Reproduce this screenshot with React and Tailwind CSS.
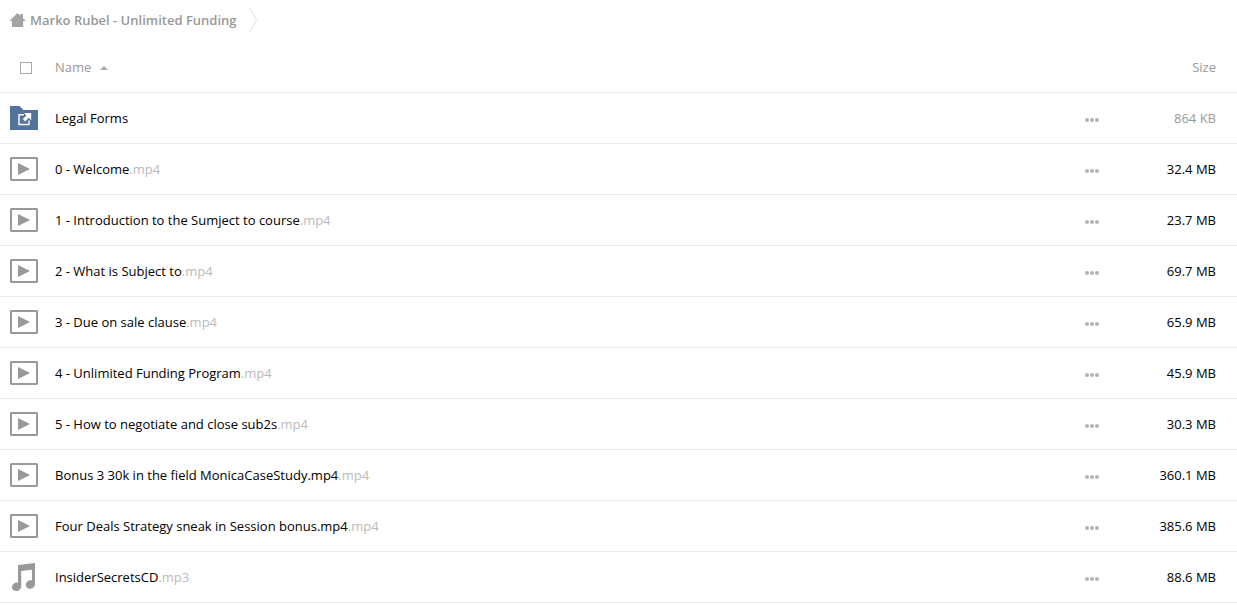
const files = [
  { name: "Legal Forms", ext: "", size: "864 KB", kind: "folder" },
  { name: "0 - Welcome", ext: ".mp4", size: "32.4 MB", kind: "video" },
  { name: "1 - Introduction to the Sumject to course", ext: ".mp4", size: "23.7 MB", kind: "video" },
  { name: "2 - What is Subject to", ext: ".mp4", size: "69.7 MB", kind: "video" },
  { name: "3 - Due on sale clause", ext: ".mp4", size: "65.9 MB", kind: "video" },
  { name: "4 - Unlimited Funding Program", ext: ".mp4", size: "45.9 MB", kind: "video" },
  { name: "5 - How to negotiate and close sub2s", ext: ".mp4", size: "30.3 MB", kind: "video" },
  { name: "Bonus 3 30k in the field MonicaCaseStudy.mp4", ext: ".mp4", size: "360.1 MB", kind: "video" },
  { name: "Four Deals Strategy sneak in Session bonus.mp4", ext: ".mp4", size: "385.6 MB", kind: "video" },
  { name: "InsiderSecretsCD", ext: ".mp3", size: "88.6 MB", kind: "audio" },
];

function FolderIcon() {
  return (
    <svg className="block" width="28" height="24" viewBox="0 0 28 24" aria-hidden="true">
      <path d="M0 0h9.500l4 4H28v20H0z" fill="#54739c" />
      <path d="M14 8.800H9v9.800h10v-4" fill="none" stroke="#f4f6f9" strokeWidth="1.500" />
      <path d="M14 7h7.200v7.200l-2.400-2.400-3.600 3.600-2.400-2.400 3.600-3.600z" fill="#fff" />
    </svg>
  );
}

function VideoIcon() {
  return (
    <svg className="block" width="28" height="24" viewBox="0 0 28 24" aria-hidden="true">
      <rect x="1" y="1" width="26" height="22" rx="0.400" fill="none" stroke="#999" strokeWidth="2" />
      <path d="M8 6v12l12-6z" fill="#999" />
    </svg>
  );
}

function AudioIcon() {
  return (
    <svg className="block" width="28" height="28" viewBox="0 0 28 28" aria-hidden="true">
      <path
        d="M8 2 25 0v20.800c0 2.700-2.200 5-5 5-2.300 0-4.200-1.500-4.200-3.700 0-2.700 2.300-4.800 5-4.800.5 0 .9.1 1.200.2V6.800L11.200 8v15.200c0 2.700-2.300 4.800-5 4.800C3.800 28 2 26.500 2 24.300c0-2.700 2.300-4.800 5-4.800.4 0 .7 0 1 .1z"
        fill="#999"
      />
    </svg>
  );
}

const icons = { folder: FolderIcon, video: VideoIcon, audio: AudioIcon };

function FileRow({ file }) {
  const Icon = icons[file.kind];
  return (
    <tr className="h-[51px]">
      <td className="border-b border-[#ebebeb] pl-2.5">
        <Icon />
      </td>
      <td className="border-b border-[#ebebeb]">
        <a href="#" className="text-black">
          {file.name}
          <span className="text-[#bbb]">{file.ext}</span>
        </a>
      </td>
      <td className="border-b border-[#ebebeb]">
        <button type="button" aria-label={`Actions for ${file.name}`} className="block pt-1">
          <svg className="block" width="14" height="4" viewBox="0 0 14 4" fill="#b3b3b3" aria-hidden="true">
            <circle cx="2" cy="2" r="2" />
            <circle cx="7" cy="2" r="2" />
            <circle cx="12" cy="2" r="2" />
          </svg>
        </button>
      </td>
      <td
        className={
          file.kind === "folder"
            ? "border-b border-[#ebebeb] pr-[21px] text-right text-[#999]"
            : "border-b border-[#ebebeb] pr-[21px] text-right text-black"
        }
      >
        {file.size}
      </td>
    </tr>
  );
}

export default function App() {
  return (
    <main className="bg-white font-['Open_Sans',sans-serif] text-[13px] leading-5 text-[#999]">
      <nav aria-label="Breadcrumb" className="flex h-[42px] items-start px-2.5 pt-2">
        <a href="#" className="flex h-6 items-center gap-1 font-semibold">
          <svg className="block" width="16" height="14" viewBox="0 0 16 14" fill="#a3a3a3" aria-hidden="true">
            <path d="M7.500 0 10.500 2.800V1H13v4.200L15.500 7.500V8H13.200v6H2V8H0v-.5z" />
          </svg>
          Marko Rubel - Unlimited Funding
        </a>
        <svg className="ml-3 block" width="8" height="24" viewBox="0 0 8 24" fill="none" stroke="#e3e3e3" aria-hidden="true">
          <path d="M0.500 0 7.500 12 0.500 24" />
        </svg>
      </nav>
      <table className="w-full table-fixed border-separate border-spacing-0">
        <colgroup>
          <col className="w-[55px]" />
          <col />
          <col className="w-[52px]" />
          <col className="w-[100px]" />
        </colgroup>
        <thead>
          <tr className="h-[51px]">
            <th className="border-b border-[#ebebeb] pt-0.5 pl-5">
              <input
                type="checkbox"
                aria-label="Select all"
                className="block h-3 w-3 appearance-none border border-[#aaa] bg-white checked:bg-[#999]"
              />
            </th>
            <th className="border-b border-[#ebebeb] text-left font-normal">
              <button type="button" className="flex items-center gap-[9px]">
                Name
                <svg className="mt-0.5 block" width="8" height="4" viewBox="0 0 8 4" fill="#aaa" aria-hidden="true">
                  <path d="M0 4 4 0l4 4z" />
                </svg>
              </button>
            </th>
            <th className="border-b border-[#ebebeb]" />
            <th className="border-b border-[#ebebeb] pr-[21px] text-right font-normal">
              <button type="button">Size</button>
            </th>
          </tr>
        </thead>
        <tbody>
          {files.map((file) => (
            <FileRow key={file.name} file={file} />
          ))}
        </tbody>
      </table>
    </main>
  );
}
